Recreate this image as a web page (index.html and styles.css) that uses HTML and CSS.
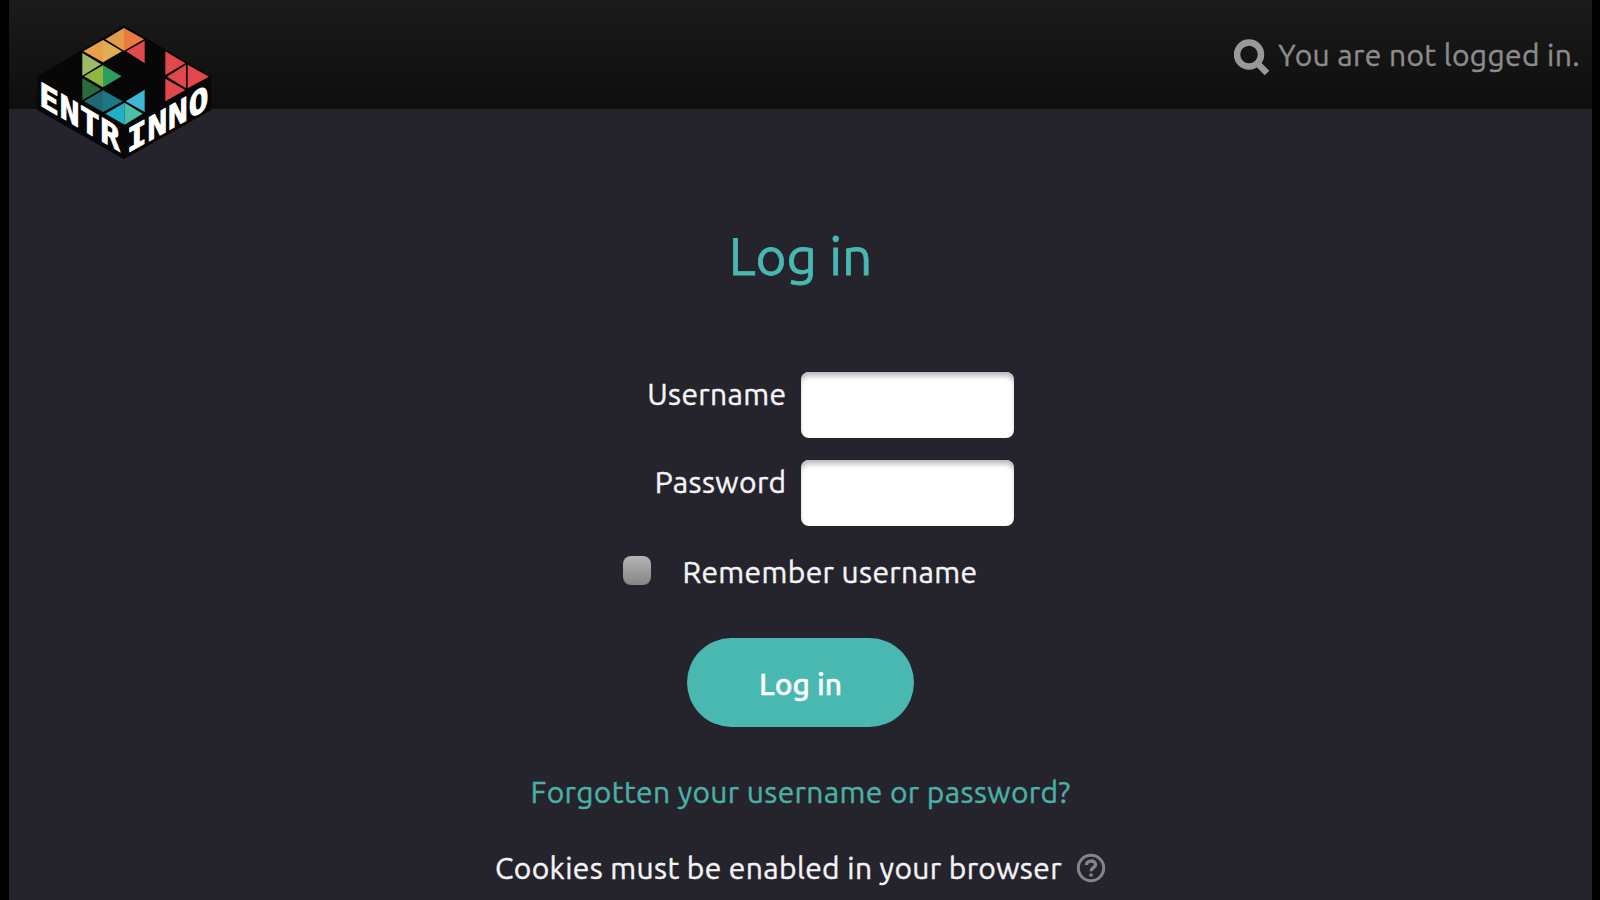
FILE: index.html
```html
<!DOCTYPE html>
<html lang="en">
<head>
  <meta charset="utf-8">
  <title>Entrinno: Log in</title>
  <link rel="stylesheet" href="styles.css">
</head>
<body>
  <div class="page">
    <header class="header">
      <a class="logo" href="#">
        <svg width="210" height="170" viewBox="0 0 630 510">
          <!-- cube -->
          <path fill="#070707" d="M312 46L574 199V300L312 448L52 300V199z"/>
          <!-- C -->
          <path fill="#e39b4b" d="M312 54V122L256 88z"/>
          <path fill="#e8793f" d="M312 54L372 88L312 122z"/>
          <path fill="#e04a4c" d="M374 92V160L318 124z"/>
          <path fill="#e8a04a" d="M249 90V157L190 124z"/>
          <path fill="#dfae54" d="M249 90L306 124L249 157z"/>
          <path fill="#9dbb66" d="M187 129V197L243 163z"/>
          <path fill="#8fb73e" d="M249 166V232L192 199z"/>
          <path fill="#2b9d5c" d="M249 166L305 199L249 232z"/>
          <path fill="#2a6b3e" d="M187 204V271L243 238z"/>
          <path fill="#1f6873" d="M249 241V306L192 274z"/>
          <path fill="#1c7787" d="M249 241L308 274L249 306z"/>
          <path fill="#22aec8" d="M314 278V344L256 311z"/>
          <path fill="#4bbfa6" d="M314 278L368 311L314 344z"/>
          <path fill="#3eb6d6" d="M374 239V306L317 274z"/>
          <!-- arrow -->
          <path fill="#e0484c" d="M436 124V195L496 160zM498 164V235L441 200zM503 164L567 200L503 235zM436 206V274L496 240z"/>
          <text class="logo-text" textLength="242" transform="matrix(1 .585 0 1 58 284)">ENTR</text>
          <text class="logo-text" textLength="244" transform="matrix(1 -.555 0 1 321 430)">INNO</text>
        </svg>
      </a>
      <div class="usermenu">
        <svg class="search" width="36" height="37" viewBox="0 0 36 37" fill="none" stroke="currentColor" stroke-width="6.5"><circle cx="15" cy="15.5" r="12"/><path d="M23 24L33 34"/></svg>
        <span class="login-info">You are not logged in.</span>
      </div>
    </header>

    <main class="login">
      <h2>Log in</h2>
      <form class="login-form">
        <div class="field">
          <label for="username">Username</label>
          <input type="text" id="username">
        </div>
        <div class="field">
          <label for="password">Password</label>
          <input type="password" id="password">
        </div>
        <div class="remember">
          <input type="checkbox" id="remember">
          <label for="remember">Remember username</label>
        </div>
        <button type="submit" class="login-btn">Log in</button>
      </form>
      <a class="forgot" href="#">Forgotten your username or password?</a>
      <div class="cookies">
        <span>Cookies must be enabled in your browser</span>
        <svg width="30" height="30" viewBox="0 0 30 30" fill="none" stroke="#85848a" stroke-width="3"><circle cx="15" cy="15" r="12.7"/><path stroke-width="3.4" d="M10.5 12C10.5 6.8 19.5 6.8 19.5 11.8C19.5 15 15 14.6 15 18.2M15 20.5V23.5"/></svg>
      </div>
    </main>
  </div>
</body>
</html>
```

FILE: styles.css
```css
* { box-sizing: border-box; }

body {
  margin: 0;
  height: 900px;
  padding: 0 8px 0 9px;
  overflow: hidden;
  background: #000;
  color: #f4f4f6;
  font-family: Ubuntu, "Noto Sans", sans-serif;
  font-size: 30px;
  line-height: 40px;
  letter-spacing: 0.36px;
  -webkit-text-stroke: 0.4px;
}

.page { height: 900px; background: #25232c; }

/* Header */
.header {
  display: flex;
  justify-content: space-between;
  height: 109px;
  padding: 10px 12px 0 11px;
  background: linear-gradient(#1b1b1b, #0e0e0e);
}
.logo svg { display: block; }
.logo-text {
  font: bold 98px "DejaVu Sans Mono", monospace;
  letter-spacing: 0;
  fill: #fff;
  stroke: #fff;
  stroke-width: 3;
}
.usermenu {
  display: flex;
  align-items: flex-start;
  gap: 8px;
  color: #999;
}
.search { margin-top: 29px; }
.login-info { margin-top: 25px; color: #8c8c8c; }

/* Login form */
.login {
  display: flex;
  flex-direction: column;
  align-items: center;
}
.login h2 {
  margin: 112px 0 0;
  font-size: 53px;
  font-weight: 400;
  line-height: 70px;
  letter-spacing: 0;
  color: #49b8b1;
  -webkit-text-stroke: 0.8px;
}
.login-form {
  display: flex;
  flex-direction: column;
  align-items: center;
  margin-top: 81px;
}
.field {
  display: flex;
  justify-content: flex-end;
  width: 426px;
  gap: 14px;
  margin-bottom: 22px;
}
.field label { margin-top: 2px; }
.field input {
  width: 213px;
  height: 66px;
  padding: 0 12px;
  border: 0;
  border-radius: 8px;
  background: #fff;
  box-shadow: inset 0 5px 5px -1px #bbb;
  font: inherit;
}
.remember {
  display: flex;
  align-items: center;
  gap: 31px;
  height: 40px;
  margin-top: 4px;
}
.remember input {
  appearance: none;
  width: 28px;
  height: 29px;
  margin: 0 0 4px;
  border-radius: 8px;
  background: linear-gradient(#b5b5b5, #858585);
}
.login-btn {
  width: 227px;
  height: 89px;
  margin-top: 46px;
  padding-top: 3px;
  border: 0;
  border-radius: 45px;
  background: #49b8b1;
  color: #fff;
  font: 500 30px Ubuntu, "Noto Sans", sans-serif;
}
.forgot {
  margin-top: 45px;
  color: #49b1a7;
  text-decoration: none;
}
.cookies {
  display: flex;
  align-items: center;
  gap: 14px;
  margin-top: 36px;
}
```
